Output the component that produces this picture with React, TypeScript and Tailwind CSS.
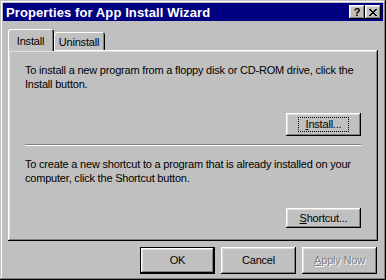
import React from 'react';

const raised =
  'shadow-[inset_-1px_-1px_0_#000,inset_1px_1px_0_#fff,inset_-2px_-2px_0_#808080,inset_2px_2px_0_#dfdfdf]';

function Btn({
  children,
  isDefault = false,
  className = '',
}: {
  children: React.ReactNode;
  isDefault?: boolean;
  className?: string;
}) {
  return (
    <div
      className={`flex items-center justify-center bg-[#c0c0c0] ${
        isDefault
          ? 'border border-black shadow-[inset_-1px_-1px_0_#000,inset_1px_1px_0_#fff,inset_-2px_-2px_0_#808080,inset_2px_2px_0_#dfdfdf]'
          : raised
      } ${className}`}
    >
      {children}
    </div>
  );
}

function CaptionBtn({ children }: { children: React.ReactNode }) {
  return (
    <div
      className={`w-[16px] h-[14px] bg-[#c0c0c0] flex items-center justify-center ${raised}`}
    >
      {children}
    </div>
  );
}

export default function App() {
  return (
    <div
      className="w-[386px] h-[280px] bg-[#c0c0c0] p-[3px] flex flex-col text-[11px] tracking-[-0.2px] text-black shadow-[inset_-1px_-1px_0_#000,inset_1px_1px_0_#c0c0c0,inset_-2px_-2px_0_#808080,inset_2px_2px_0_#fff]"
      style={{ fontFamily: '"Liberation Sans", Arial, sans-serif' }}
    >
      {/* title bar */}
      <div className="h-[18px] bg-[#000080] flex items-center pl-[3px] pr-[2px]">
        <span className="text-white font-bold text-[13px] tracking-[0.1px] leading-none flex-1">
          Properties for App Install Wizard
        </span>
        <div className="flex">
          <CaptionBtn>
            <span className="font-bold text-[11px] leading-none mt-[1px]">?</span>
          </CaptionBtn>
          <CaptionBtn>
            <svg width="8" height="7" viewBox="0 0 8 7" shapeRendering="crispEdges">
              <path
                d="M0 0h2v1h-2zM6 0h2v1h-2zM1 1h2v1h-2zM5 1h2v1h-2zM2 2h4v1h-4zM3 3h2v1h-2zM2 4h4v1h-4zM1 5h2v1h-2zM5 5h2v1h-2zM0 6h2v1h-2zM6 6h2v1h-2z"
                fill="#000"
              />
            </svg>
          </CaptionBtn>
        </div>
      </div>

      {/* tabs */}
      <div className="ml-[5px] mt-[8px] flex items-end h-[22px] relative z-10">
        <div className="h-[22px] w-[46px] bg-[#c0c0c0] rounded-t-[3px] shadow-[inset_1px_1px_0_#fff,inset_-1px_0_0_#000,inset_-2px_0_0_#808080] flex items-start justify-center pt-[4px] pr-[1px]">
          Install
        </div>
        <div className="h-[18px] w-[51px] bg-[#c0c0c0] rounded-t-[3px] mb-[1px] shadow-[inset_1px_1px_0_#fff,inset_-1px_0_0_#000,inset_-2px_0_0_#808080] flex items-start justify-center pt-[2px] pr-[1px]">
          Uninstall
        </div>
      </div>

      {/* panel */}
      <div
        className={`ml-[5px] -mt-[1px] w-[370px] h-[191px] bg-[#c0c0c0] px-[17px] pt-[13px] flex flex-col overflow-hidden ${raised}`}
      >
        <p className="leading-[14px] whitespace-nowrap">
          To install a new program from a floppy disk or CD-ROM drive, click the
          <br />
          Install button.
        </p>
        <div className="flex justify-end mt-[22px]">
          <Btn className="w-[75px] h-[23px]">
            <span className="border border-dotted border-black px-[7px] leading-[13px]">
              <u>I</u>nstall...
            </span>
          </Btn>
        </div>
        <div className="mt-[8px] h-[2px] border-t border-[#808080] border-b border-b-white" />
        <p className="leading-[14px] mt-[11px] whitespace-nowrap">
          To create a new shortcut to a program that is already installed on your
          <br />
          computer, click the Shortcut button.
        </p>
        <div className="flex justify-end mt-[23px]">
          <Btn className="w-[75px] h-[20px]">
            <span>
              <u>S</u>hortcut...
            </span>
          </Btn>
        </div>
      </div>

      {/* bottom buttons */}
      <div className="flex justify-end gap-[6px] mt-[6px] pr-[6px]">
        <Btn isDefault className="w-[75px] h-[27px]">
          OK
        </Btn>
        <Btn className="w-[75px] h-[27px]">Cancel</Btn>
        <Btn className="w-[75px] h-[27px]">
          <span className="text-[#808080] [text-shadow:1px_1px_0_#fff]">
            <u>A</u>pply Now
          </span>
        </Btn>
      </div>
    </div>
  );
}
